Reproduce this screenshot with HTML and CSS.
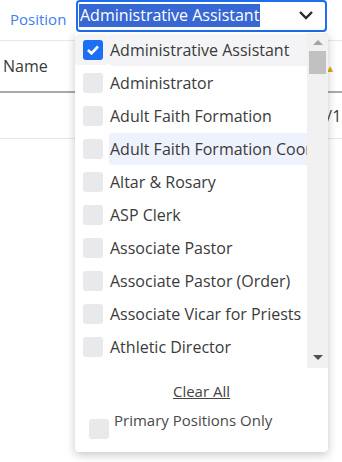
FILE: index.html
```html
<!DOCTYPE html>
<html lang="en">
  <head>
    <meta charset="UTF-8" />
    <meta name="viewport" content="width=device-width, initial-scale=1.0" />
    <title>Staff Directory</title>
    <link rel="stylesheet" href="styles.css">
  </head>
  <body>
    <div class="page">
      <div class="filter-bar">
        <label class="filter-label">Position</label>
        <div class="select-box">
          <span class="select-value">Administrative Assistant</span>
          <svg class="chevron" width="16" height="10" viewBox="0 0 16 10">
            <path d="M2 2 L8 8 L14 2" fill="none" stroke="#2b2b2b" stroke-width="2.4" />
          </svg>
        </div>
      </div>

      <div class="table">
        <div class="table-head">
          <div class="col-name">Name</div>
          <div class="col-date">Date <span class="sort">&#9650;</span></div>
        </div>
        <div class="table-row">
          <div class="col-name"></div>
          <div class="col-date row-date">01/15/2024</div>
        </div>
      </div>

      <div class="dropdown">
        <div class="options">
          <ul class="option-list">
            <li class="option selected">
              <span class="check-cell"><span class="checkbox checked">
                <svg width="14" height="12" viewBox="0 0 14 12">
                  <path d="M2 6 L5.5 9.5 L12 2.5" fill="none" stroke="#fff" stroke-width="2.6" />
                </svg>
              </span></span>
              <span class="option-label">Administrative Assistant</span>
            </li>
            <li class="option">
              <span class="check-cell"><span class="checkbox"></span></span>
              <span class="option-label">Administrator</span>
            </li>
            <li class="option">
              <span class="check-cell"><span class="checkbox"></span></span>
              <span class="option-label">Adult Faith Formation</span>
            </li>
            <li class="option hover">
              <span class="check-cell"><span class="checkbox"></span></span>
              <span class="option-label">Adult Faith Formation Coordinator</span>
            </li>
            <li class="option">
              <span class="check-cell"><span class="checkbox"></span></span>
              <span class="option-label">Altar &amp; Rosary</span>
            </li>
            <li class="option">
              <span class="check-cell"><span class="checkbox"></span></span>
              <span class="option-label">ASP Clerk</span>
            </li>
            <li class="option">
              <span class="check-cell"><span class="checkbox"></span></span>
              <span class="option-label">Associate Pastor</span>
            </li>
            <li class="option">
              <span class="check-cell"><span class="checkbox"></span></span>
              <span class="option-label">Associate Pastor (Order)</span>
            </li>
            <li class="option">
              <span class="check-cell"><span class="checkbox"></span></span>
              <span class="option-label">Associate Vicar for Priests</span>
            </li>
            <li class="option">
              <span class="check-cell"><span class="checkbox"></span></span>
              <span class="option-label">Athletic Director</span>
            </li>
          </ul>
          <div class="scrollbar">
            <span class="arrow up"></span>
            <span class="thumb"></span>
            <span class="track"></span>
            <span class="arrow down"></span>
          </div>
        </div>

        <div class="dropdown-footer">
          <a class="clear-all">Clear All</a>
          <div class="primary-only">
            <span class="checkbox"></span>
            <span class="primary-label">Primary Positions Only</span>
          </div>
        </div>
      </div>
    </div>
  </body>
</html>
```

FILE: styles.css
```css
* {
  margin: 0;
  padding: 0;
  box-sizing: border-box;
}

body {
  font-family: "Open Sans", "Noto Sans", Arial, sans-serif;
  background: #fff;
  color: #333;
  width: 342px;
  height: 462px;
  overflow: hidden;
}

.page {
  position: relative;
  height: 462px;
  overflow: hidden;
}

.filter-bar {
  display: flex;
  align-items: flex-start;
  height: 41px;
  border-bottom: 1px solid #e8e8e8;
}

.filter-label {
  color: #3d80ee;
  font-size: 15px;
  line-height: 20px;
  padding: 9px 0 0 10px;
  width: 76px;
}

.select-box {
  width: 251px;
  height: 32px;
  border: 2px solid #1e6ff0;
  border-radius: 4px;
  display: flex;
  align-items: center;
  justify-content: space-between;
  padding: 0 11px 0 1px;
}

.select-value {
  background: #3767d3;
  color: #fff;
  font-size: 16px;
  line-height: 23px;
  padding: 0 1px;
  margin-bottom: 2px;
}

.chevron {
  margin-bottom: 2px;
}

.table {
  overflow: hidden;
}

.table-head {
  display: flex;
  height: 52px;
  align-items: center;
  border-bottom: 2px solid #a9a9a9;
  font-size: 16px;
}

.table-row {
  display: flex;
  height: 46px;
  align-items: center;
  border-bottom: 1px solid #e6e6e6;
  font-size: 16px;
}

.col-name {
  width: 286px;
  padding-left: 3px;
  color: #3a3a3a;
  flex-shrink: 0;
}

.col-date {
  white-space: nowrap;
  color: #3a3a3a;
}

.row-date {
  padding-left: 22px;
}

.sort {
  color: #e0a800;
  font-size: 10px;
}

.dropdown {
  position: absolute;
  left: 75px;
  top: 32px;
  width: 253px;
  height: 420px;
  background: #fff;
  border-radius: 4px;
  box-shadow: 0 3px 10px rgba(0, 0, 0, 0.22);
}

.options {
  display: flex;
  height: 336px;
  padding-top: 1px;
}

.option-list {
  list-style: none;
  flex: 1;
  overflow: hidden;
}

.option {
  display: flex;
  align-items: center;
  height: 33px;
}

.check-cell {
  width: 34px;
  height: 31px;
  display: flex;
  align-items: center;
  padding-left: 8px;
  border-radius: 4px;
}

.option-label {
  flex: 1;
  height: 32px;
  line-height: 32px;
  padding-left: 1px;
  font-size: 16px;
  color: #3b3b3b;
  white-space: nowrap;
  overflow: hidden;
  border-radius: 3px 0 0 3px;
}

.option.selected .check-cell,
.option.selected .option-label {
  background: #f4f4f6;
}

.option.hover .option-label {
  background: #eef2fc;
}

.checkbox {
  width: 20px;
  height: 20px;
  border-radius: 3px;
  background: #e9e9ec;
  display: flex;
  align-items: center;
  justify-content: center;
  flex-shrink: 0;
}

.checkbox.checked {
  background: #1c6ff2;
}

.scrollbar {
  width: 21px;
  background: #f1f1f1;
  display: flex;
  flex-direction: column;
  align-items: center;
}

.arrow {
  width: 0;
  height: 0;
  border-left: 5px solid transparent;
  border-right: 5px solid transparent;
  margin: 7px 0 6px;
}

.arrow.up {
  border-bottom: 5px solid #a3a3a3;
}

.arrow.down {
  border-top: 5px solid #505050;
  margin: 6px 0 8px;
}

.thumb {
  width: 17px;
  height: 23px;
  background: #c1c1c1;
}

.track {
  flex: 1;
}

.dropdown-footer {
  display: flex;
  flex-direction: column;
  align-items: center;
  padding-top: 12px;
}

.clear-all {
  font-size: 15px;
  color: #444;
  text-decoration: underline;
  line-height: 22px;
}

.primary-only {
  display: flex;
  align-items: flex-start;
  width: 100%;
  padding: 7px 0 0 14px;
}

.primary-only .checkbox {
  margin-top: 10px;
}

.primary-label {
  font-size: 15px;
  color: #4a4a4a;
  line-height: 22px;
  margin-left: 5px;
}
```
